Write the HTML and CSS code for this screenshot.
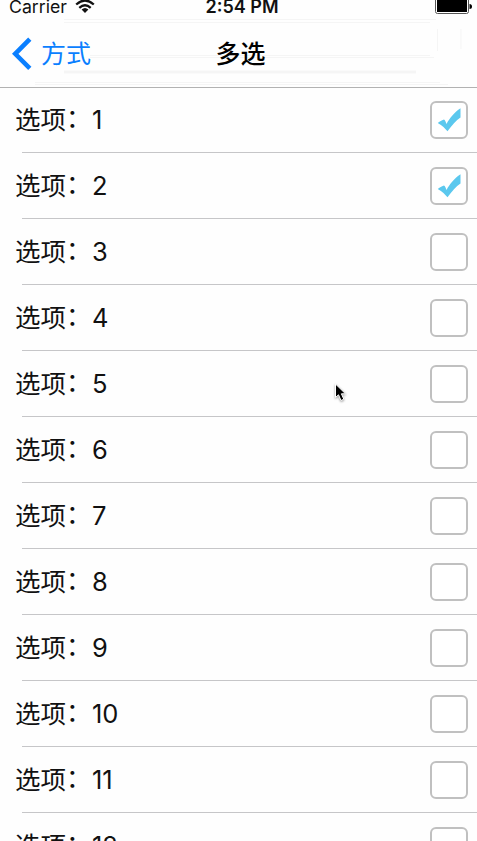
FILE: index.html
```html
<!DOCTYPE html>
<html lang="zh-CN">
<head>
<meta charset="utf-8">
<title>多选</title>
<link rel="stylesheet" href="styles.css">
</head>
<body>
<svg class="defs" width="0" height="0"><defs>
<symbol id="tick" viewBox="0 0 24 24"><path d="M0.200 15C2.500 13.200 5 12 6.500 11.500C7.800 12.300 8.400 14.500 9 16C12 10.500 17 4 23 0.300V9.500C18.500 12.500 14.500 17 10 23.300C7.500 20.500 5 17.500 0.200 15Z" fill="#5bc8ee"/></symbol>
</defs></svg>
<header class="header">
  <svg class="bands" width="477" height="87" fill="none" stroke="#f5f5f5"><path d="M64 19.500H436M64 22.500H430M90 55.500H430M90 57.500H434M35 82.500H440M35 84.500H448M437.500 29V51M461 29V49"/><path d="M64 72H416" stroke-width="3"/></svg>
  <div class="status">
    <div class="carrier"><span>Carrier</span>
      <svg width="20" height="16" viewBox="0 0 20 16" fill="none" stroke="#111" stroke-width="2.300"><path d="M1.200 5.500Q10-2.500 18.800 5.500M4.300 8.800Q10 3.700 15.700 8.800"/><path d="M6.600 10.500Q10 7.500 13.400 10.500L10 14Z" fill="#111" stroke="none"/></svg>
    </div>
    <div class="time">2:54 PM</div>
    <svg class="battery" width="38" height="14" viewBox="0 0 38 14"><rect x="1.500" y="-3.500" width="33" height="17" rx="2" fill="#fff" stroke="#555"/><path d="M3 0H33V12H3Z"/><path d="M35.500 4Q38 4 38 6.500T35.500 9Z"/></svg>
  </div>
  <div class="nav">
    <div class="back"><svg width="20" height="34" viewBox="0 0 20 34"><path d="M17.800 2.200L3.200 16.800L17.800 31.400" fill="none" stroke="#0a7fff" stroke-width="4.600"/></svg><span>方式</span></div>
    <h1 class="title">多选</h1>
  </div>
</header>
<main class="list">
  <div class="row"><span class="label">选项<span class="colon">：</span></span><span class="num">1</span><span class="box"><svg width="24" height="24"><use href="#tick"/></svg></span></div>
  <div class="row"><span class="label">选项<span class="colon">：</span></span><span class="num">2</span><span class="box"><svg width="24" height="24"><use href="#tick"/></svg></span></div>
  <div class="row"><span class="label">选项<span class="colon">：</span></span><span class="num">3</span><span class="box"></span></div>
  <div class="row"><span class="label">选项<span class="colon">：</span></span><span class="num">4</span><span class="box"></span></div>
  <div class="row"><span class="label">选项<span class="colon">：</span></span><span class="num">5</span><span class="box"></span></div>
  <div class="row"><span class="label">选项<span class="colon">：</span></span><span class="num">6</span><span class="box"></span></div>
  <div class="row"><span class="label">选项<span class="colon">：</span></span><span class="num">7</span><span class="box"></span></div>
  <div class="row"><span class="label">选项<span class="colon">：</span></span><span class="num">8</span><span class="box"></span></div>
  <div class="row"><span class="label">选项<span class="colon">：</span></span><span class="num">9</span><span class="box"></span></div>
  <div class="row"><span class="label">选项<span class="colon">：</span></span><span class="num">10</span><span class="box"></span></div>
  <div class="row"><span class="label">选项<span class="colon">：</span></span><span class="num">11</span><span class="box"></span></div>
  <div class="row"><span class="label">选项<span class="colon">：</span></span><span class="num">12</span><span class="box"></span></div>
</main>
<svg class="cursor" width="14" height="20" viewBox="0 0 14 20"><path d="M1.500 1V14.500L4.500 11.800L7 17.500L9.800 16.200L7.400 10.800H11.500Z" fill="#000" stroke="#fff" stroke-width="1"/></svg>
</body>
</html>
```
FILE: styles.css
```css
* { box-sizing: border-box; }
body {
  margin: 0;
  height: 841px;
  overflow: hidden;
  position: relative;
  background: #fefefe;
  color: #111;
  font-family: Inter, "Noto Sans CJK SC", sans-serif;
}
svg { display: block; flex: none; }
.defs { position: absolute; }
.header {
  position: relative;
  height: 88px;
  border-bottom: 1px solid #b2b2b2;
}
.bands { position: absolute; left: 0; top: 0; }
.status, .nav {
  position: relative;
  display: grid;
  grid-template-columns: 1fr auto 1fr;
}
.status { height: 20px; padding: 0 5px 0 9px; }
.carrier { display: flex; gap: 8px; font-size: 17.7px; line-height: 20px; }
.carrier span { margin-top: -3px; height: 20px; }
.carrier svg { margin-top: -1px; }
.time { font-size: 18px; font-weight: 600; line-height: 20px; margin: -3px 0 0 3px; }
.battery { justify-self: end; }
.nav { height: 67px; padding: 0 8px 0 12px; }
.back { display: flex; color: #0a7fff; font-size: 25px; line-height: 36px; padding-top: 17px; gap: 9px; }
.back span, .title { margin-top: -1px; }
.title { margin-bottom: 0; padding-top: 17px; font-size: 25px; font-weight: 500; line-height: 36px; color: #000; }
.list { margin-top: -1px; }
.row {
  display: flex;
  height: 66px;
  padding: 14px 9px 0 15px;
  line-height: 38px;
  background: linear-gradient(#c6c6c8, #c6c6c8) 22px 65px / 100% 1px no-repeat;
}
.label { font-size: 25.5px; width: 77px; white-space: nowrap; }
.colon { display: inline-block; line-height: 1; transform: translate(0, -2px); }
.num { font-size: 25.5px; }
.box {
  display: flex;
  margin-left: auto;
  width: 38px;
  height: 38px;
  padding: 5px 0 0 6px;
  border: 2px solid #c0c0c0;
  border-radius: 6px;
  background: #fff;
}
.box svg { transform: translateX(-0.5px); }
.cursor { position: absolute; left: 334px; top: 383px; filter: drop-shadow(0 1px 1px #0006); }
```
